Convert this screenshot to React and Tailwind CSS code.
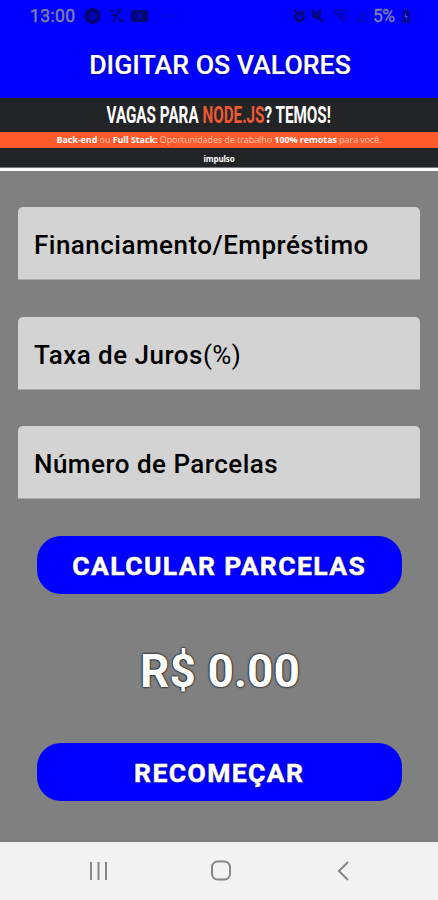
import React from "react";

const fields = [
  { label: "Financiamento/Empréstimo", gap: "mb-[37px]" },
  { label: "Taxa de Juros", suffix: "(%)", gap: "mb-[36px]" },
  { label: "Número de Parcelas", gap: "mb-[37px]" },
];

function StatusBar() {
  return (
    <div className="flex h-8 items-center pl-[30px] pr-[28px] text-[#07077c]">
      <span className="w-[46px] whitespace-nowrap text-[17.5px] leading-8 tracking-[0.4px] text-[#8585b8] [-webkit-text-stroke:0.5px_#777799]">13:00</span>
      <svg className="ml-2 h-4 w-[17px]" viewBox="0 0 17 16">
        <circle cx="8.5" cy="8" r="8" fill="#050575" />
        <path d="M5 11 8.5 4l3.5 7M8.5 8v5" fill="none" stroke="#0000df" strokeWidth="1.6" />
      </svg>
      <svg className="ml-2 h-4 w-4" viewBox="0 0 16 16" fill="none" stroke="currentColor" strokeWidth="2.2">
        <path d="M1 3h4M8 2h3L4 14M3 7h5M9 10l3 3h3" />
      </svg>
      <svg className="ml-[6px] h-4 w-[17px]" viewBox="0 0 17 16">
        <rect x="0" y="2" width="17" height="12" rx="3" fill="#050575" />
        <path d="m6.5 5 5 3-5 3z" fill="#0000e8" />
      </svg>
      <svg className="ml-3 h-4 w-4" viewBox="0 0 16 16" fill="#0808aa">
        <circle cx="2" cy="8" r="1" />
        <circle cx="8" cy="8" r="1" />
        <circle cx="14" cy="8" r="1" />
      </svg>

      <div className="ml-auto flex items-center">
        <svg className="h-4 w-[13px]" viewBox="0 0 13 16" fill="none" stroke="currentColor" strokeWidth="3">
          <circle cx="6.5" cy="8.5" r="4" />
          <path d="m1 4 2-2M12 4l-2-2M6.5 6v3" strokeWidth="1.8" />
        </svg>
        <svg className="ml-[5px] h-4 w-[14px]" viewBox="0 0 14 16" fill="currentColor">
          <path d="M1 5h3l6-4v12L4 10H1z" />
          <path d="m1 2 11 12" stroke="currentColor" strokeWidth="2" />
          <path d="m4 2 9 10" stroke="#0000ff" strokeWidth="1" />
        </svg>
        <svg className="ml-[7px] h-4 w-[17px]" viewBox="0 0 17 16" fill="none" stroke="#0505ae" strokeWidth="1.6">
          <path d="M1 4c5-3 10-3 15 0M3.5 7c4-2 7-2 10 0M6 10c2-1 3-1 5 0M2 2l12 12M9 13l6-5" />
        </svg>
        <svg className="ml-[5px] h-4 w-[13px]" viewBox="0 0 13 16" fill="#0505c8">
          <path d="M12 2v12H0z" />
          <path d="M10 7v5H5z" fill="#0000ff" />
        </svg>
        <span className="ml-[6px] w-[24px] whitespace-nowrap text-[17.5px] leading-8 tracking-[-0.5px] text-[#8585b8] [-webkit-text-stroke:0.4px_#7777a5]">5%</span>
        <svg className="ml-[5px] h-[14px] w-2" viewBox="0 0 8 14">
          <path d="M2 0h4v2h2v12H0V2h2z" fill="#0505a0" />
          <path d="M4 4 2 8h2v3l2-4H4z" fill="#4444d4" />
        </svg>
      </div>
    </div>
  );
}

function AdBanner() {
  return (
    <div className="h-[73px] bg-[#222426]">
      <div className="flex h-[34px] items-center justify-center overflow-hidden">
        <span className="origin-center scale-x-[0.635] whitespace-nowrap text-[24px] font-bold leading-[34px] text-white">
          VAGAS PARA <span className="text-[#ed5935]">NODE.JS</span>? TEMOS!
        </span>
      </div>
      <div className="flex h-4 items-center justify-center whitespace-nowrap bg-[#ff5a2c] font-['Open_Sans',sans-serif] text-[9px] leading-4 text-[#ffc6ae]">
        <p className="tracking-[-0.08px]">
          <b className="text-white">Back-end</b> ou <b className="text-white">Full Stack:</b> Oportunidades de trabalho{" "}
          <b className="text-white">100% remotas</b> para você.
        </p>
      </div>
      <div className="flex h-[19px] items-center justify-center pt-[3px] font-['Open_Sans',sans-serif] text-[8px] font-bold leading-none tracking-[-0.15px] text-white">
        impulso
      </div>
      <div className="h-[1px] bg-[#77797a]" />
      <div className="h-[3px] bg-white" />
    </div>
  );
}

function ActionButton({ children }) {
  return (
    <button className="mx-[37px] block h-[57.5px] w-[364.5px] rounded-[24px] bg-[#0000ff] text-center text-[26.5px] font-bold leading-[60px] tracking-[1.4px] text-white [-webkit-text-stroke:0.5px_#fff] [text-shadow:0_0_2px_#000]">
      {children}
    </button>
  );
}

export default function App() {
  return (
    <div className="flex h-[900px] w-[438px] flex-col overflow-hidden bg-[#808080] font-[Roboto,sans-serif]">
      <header className="h-[98px] bg-[#0000ff]">
        <StatusBar />
        <h1 className="pl-[2px] text-center text-[26.7px] font-medium leading-[66px] text-white [-webkit-text-stroke:0.2px_#fff] [text-shadow:0_0_2px_#000]">DIGITAR OS VALORES</h1>
      </header>
      <AdBanner />

      <main className="flex-1 pt-9">
        {fields.map((f) => (
          <div
            key={f.label}
            className={`mx-[18px] h-[73px] rounded-t-[5px] border-b border-[#a8a8a8] bg-[#d3d3d3] pl-4 text-[26px] font-medium leading-[76px] tracking-[0.48px] text-black ${f.gap}`}
          >
            {f.label}
            {f.suffix && <span className="font-normal">{f.suffix}</span>}
          </div>
        ))}
        <ActionButton>CALCULAR PARCELAS</ActionButton>
        <div className="h-[149.5px] pl-[2px] text-center text-[46px] font-bold leading-[154px] text-white [text-shadow:0_0_2px_#000,0_0_2px_#000]">
          R$ 0.00
        </div>
        <ActionButton>RECOMEÇAR</ActionButton>
      </main>

      <nav className="flex h-[58px] items-center bg-[#f2f2f2] pl-[89px] text-[#868686]">
        <svg className="h-5 w-5" viewBox="0 0 20 20" stroke="currentColor" strokeWidth="2">
          <path d="M2 1v18M9.5 1v18M17 1v18" />
        </svg>
        <svg className="ml-[101px] h-[22px] w-[22px]" viewBox="0 0 22 22" fill="none" stroke="currentColor" strokeWidth="2">
          <rect x="2" y="1.5" width="18" height="18" rx="5.5" />
        </svg>
        <svg className="ml-[104px] h-5 w-[14px]" viewBox="0 0 14 20" fill="none" stroke="currentColor" strokeWidth="2">
          <path d="m12 1-9 9 9 9" />
        </svg>
      </nav>
    </div>
  );
}
